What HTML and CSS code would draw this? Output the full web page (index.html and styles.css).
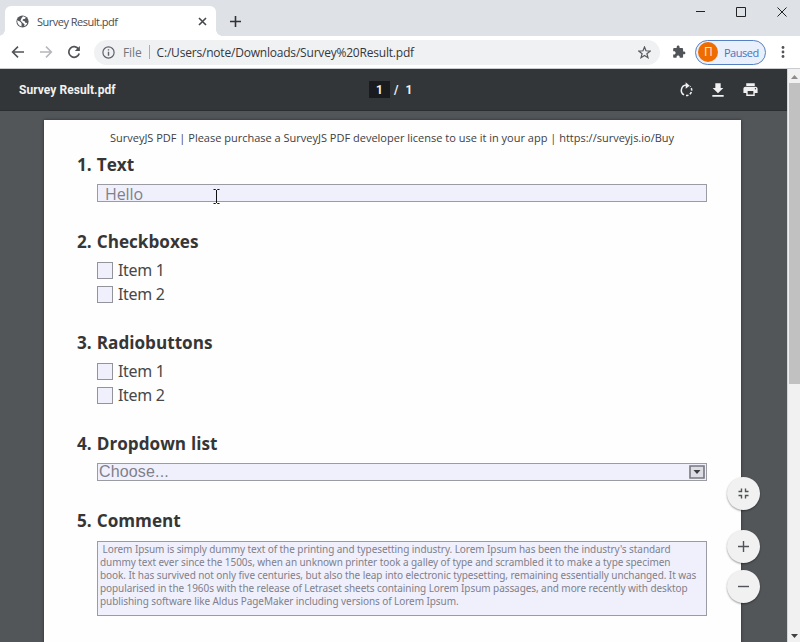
FILE: index.html
```html
<!DOCTYPE html>
<html lang="en">
<head>
<meta charset="utf-8">
<title>Survey Result.pdf</title>
<link rel="stylesheet" href="styles.css">
</head>
<body>
<div class="browser">
  <header class="tabstrip">
    <div class="tab">
      <svg class="globe" width="13" height="13" viewBox="0 0 13 13"><circle cx="6.5" cy="6.5" r="6.1" fill="#54575b"/><path d="M1.2 5.300 4.300 6.800 5.600 8.600 5.500 11.600C2.800 10.800 1 8.600 1.200 5.300ZM7 1.300 9.600 2.200 9.200 3.800 7 4.200 6.500 5.500 8.700 6.300 9.300 7.700 11.200 8.100C10.700 9.800 9.500 10.900 8.200 11.300L8.500 9.300 6.300 7.500 4.500 5.600 5.500 3.300Z" fill="#fff"/></svg>
      <span class="tab-title">Survey Result.pdf</span>
      <svg class="tab-close" width="9" height="9" viewBox="0 0 9 9"><path d="M1 1 8 8M8 1 1 8" stroke="#45484c" stroke-width="1.6"/></svg>
    </div>
    <svg class="new-tab" width="11" height="11" viewBox="0 0 11 11"><path d="M5.5 0V11M0 5.5H11" stroke="#303236" stroke-width="1.6"/></svg>
    <div class="window-buttons">
      <svg width="10" height="10" viewBox="0 0 10 10"><path d="M1 4.5H10" stroke="#222"/></svg>
      <svg width="10" height="10" viewBox="0 0 10 10"><path d="M.5 .5H9.5V9.5H.5Z" fill="none" stroke="#222"/></svg>
      <svg width="10" height="10" viewBox="0 0 10 10"><path d="M.5 .5 9.5 9.5M9.5 .5 .5 9.5" stroke="#222"/></svg>
    </div>
  </header>
  <nav class="toolbar">
    <svg class="nav-icon" width="14" height="14" viewBox="0 0 14 14"><path d="M13 7H2M7 1.6 1.6 7 7 12.4" fill="none" stroke="#505357" stroke-width="1.6"/></svg>
    <svg class="nav-icon" width="14" height="14" viewBox="0 0 14 14"><path d="M1 7H12M7 1.6 12.4 7 7 12.4" fill="none" stroke="#b5b7ba" stroke-width="1.5"/></svg>
    <svg class="nav-icon" width="14" height="14" viewBox="0 0 14 14"><path d="M11.6 4.2A5.3 5.3 0 1 0 12.2 8.4" fill="none" stroke="#505357" stroke-width="1.7"/><path d="M12.9 .9V6H7.8Z" fill="#505357"/></svg>
    <div class="omnibox">
      <svg width="13" height="13" viewBox="0 0 13 13"><circle cx="6.5" cy="6.5" r="5.6" fill="none" stroke="#5f6368" stroke-width="1.2"/><path d="M6.5 5.7V9.7M6.5 3.2V4.6" stroke="#5f6368" stroke-width="1.4"/></svg>
      <span class="scheme">File</span>
      <span class="divider"></span>
      <span class="url">C:/Users/note/Downloads/Survey%20Result.pdf</span>
      <svg class="star" width="13" height="13" viewBox="0 0 13 13"><path d="M6.5 1 8 4.8 12.1 5.1 8.9 7.7 10 11.7 6.5 9.5 3 11.7 4.1 7.7 .9 5.1 5 4.8Z" fill="none" stroke="#56595e" stroke-width="1.2"/></svg>
    </div>
    <svg class="puzzle" width="14" height="14" viewBox="0 0 24 24"><path d="M20.5 11H19V7c0-1.100-.9-2-2-2h-4V3.500C13 2.120 11.880 1 10.500 1S8 2.120 8 3.500V5H4c-1.100 0-1.990.9-1.990 2v3.800H3.500c1.490 0 2.700 1.210 2.700 2.700s-1.210 2.700-2.700 2.700H2V20c0 1.100.9 2 2 2h3.800v-1.500c0-1.490 1.210-2.700 2.700-2.700s2.700 1.210 2.700 2.700V22H17c1.100 0 2-.9 2-2v-4h1.500c1.380 0 2.500-1.120 2.500-2.500S21.880 11 20.500 11z" fill="#505357"/></svg>
    <div class="profile"><span class="avatar">П</span><span>Paused</span></div>
    <svg class="kebab" width="4" height="12" viewBox="0 0 4 12"><g fill="#505357"><circle cx="2" cy="1.5" r="1.4"/><circle cx="2" cy="6" r="1.4"/><circle cx="2" cy="10.500" r="1.4"/></g></svg>
  </nav>
  <main class="viewer">
    <div class="document-area">
      <div class="pdf-bar">
        <span class="pdf-title">Survey Result.pdf</span>
        <div class="pages"><span class="page-input">1</span><span class="slash">/</span><span>1</span></div>
        <div class="pdf-actions">
          <svg width="16" height="16" viewBox="0 0 24 24"><path d="M12.500 4.500A8 8 0 0 0 9 19.400" fill="none" stroke="#f1f1f1" stroke-width="2.300"/><path d="M11.500 .5 17.500 5.500 11.500 10Z" fill="#f1f1f1"/><path d="M12 20.300A8 8 0 0 0 20.500 12 8 8 0 0 0 18 6.500" fill="none" stroke="#f1f1f1" stroke-width="2.300" stroke-dasharray="3.800 2.200"/></svg>
          <svg width="16" height="16" viewBox="0 0 24 24"><path d="M20 9h-4V2H8v7H4l8 8ZM3.500 19.500v2.500h17v-2.500Z" fill="#f1f1f1"/></svg>
          <svg width="17" height="17" viewBox="0 0 24 24"><path d="M19 8H5c-1.660 0-3 1.340-3 3v6h4v4h12v-4h4v-6c0-1.660-1.340-3-3-3zm-3 11H8v-5h8v5zm3-7c-.55 0-1-.45-1-1s.45-1 1-1 1 .45 1 1-.45 1-1 1zM18 3H6v4h12V3z" fill="#f1f1f1"/></svg>
        </div>
      </div>
      <article class="page">
        <p class="notice">SurveyJS PDF | Please purchase a SurveyJS PDF developer license to use it in your app | https://surveyjs.io/Buy</p>
        <section class="question">
          <h2>1. Text</h2>
          <div class="field text-field"><span>Hello</span>
            <svg class="ibeam" width="7" height="15" viewBox="0 0 7 15"><path d="M.5 .5H2.500L3.500 1.500 4.500 .5H6.500M3.500 1V14M.5 14.500H2.500L3.500 13.500 4.500 14.500H6.500" fill="none" stroke="#111"/></svg>
          </div>
        </section>
        <section class="question">
          <h2>2. Checkboxes</h2>
          <ul class="choices"><li><i class="box"></i>Item 1</li><li><i class="box"></i>Item 2</li></ul>
        </section>
        <section class="question">
          <h2>3. Radiobuttons</h2>
          <ul class="choices"><li><i class="box"></i>Item 1</li><li><i class="box"></i>Item 2</li></ul>
        </section>
        <section class="question">
          <h2>4. Dropdown list</h2>
          <div class="field select-field"><span>Choose...</span>
            <svg width="16" height="14" viewBox="0 0 16 14"><path d="M1 1H15V13H1Z" fill="#dcdde5" stroke="#77787e" stroke-width="1.600"/><path d="M4.500 5H11.500L8 9Z" fill="#3d3e43"/></svg>
          </div>
        </section>
        <section class="question">
          <h2>5. Comment</h2>
          <div class="field comment-field"><span>&nbsp;Lorem Ipsum is simply dummy text of the printing and typesetting industry. Lorem Ipsum has been the industry's standard</span><span>dummy text ever since the 1500s, when an unknown printer took a galley of type and scrambled it to make a type specimen</span><span>book. It has survived not only five centuries, but also the leap into electronic typesetting, remaining essentially unchanged. It was</span><span>popularised in the 1960s with the release of Letraset sheets containing Lorem Ipsum passages, and more recently with desktop</span><span>publishing software like Aldus PageMaker including versions of Lorem Ipsum.</span></div>
        </section>
      </article>
      <div class="zoom-controls">
        <span class="round fit"><svg width="11" height="11" viewBox="0 0 11 11"><path d="M.5 3.500H3.500V.5M7.500 .5V3.500H10.500M.5 7.500H3.500V10.500M7.500 10.500V7.500H10.500" fill="none" stroke="#505357" stroke-width="1.400"/></svg></span>
        <span class="round"><svg width="11" height="11" viewBox="0 0 11 11"><path d="M5.500 0V11M0 5.500H11" stroke="#505357" stroke-width="1.400"/></svg></span>
        <span class="round"><svg width="11" height="11" viewBox="0 0 11 11"><path d="M0 5.500H11" stroke="#505357" stroke-width="1.400"/></svg></span>
      </div>
    </div>
    <div class="scrollbar">
      <svg class="up" width="7" height="4" viewBox="0 0 7 4"><path d="M0 4 3.500 0 7 4Z" fill="#8c8c8c"/></svg>
      <div class="thumb"></div>
      <svg class="down" width="7" height="4" viewBox="0 0 7 4"><path d="M0 0 3.500 4 7 0Z" fill="#404040"/></svg>
    </div>
  </main>
</div>
</body>
</html>
```
FILE: styles.css
```css
* { box-sizing: border-box; }
body { margin: 0; font-family: "Open Sans", "Noto Sans", sans-serif; overflow: hidden; }
svg { display: block; flex: none; }
.browser { width: 800px; height: 642px; display: flex; flex-direction: column; overflow: hidden; }

.tabstrip { height: 36px; flex: none; background: #dee1e6; display: flex; padding-left: 5px; }
.tab { position: relative; width: 211px; height: 30px; margin-top: 6px; padding: 0 9px 0 11px; background: #fff; border-radius: 6px 6px 0 0; display: flex; align-items: center; }
.tab::before, .tab::after { content: ""; position: absolute; bottom: 0; width: 6px; height: 6px; }
.tab::before { left: -6px; background: radial-gradient(circle at 0 0, transparent 5.5px, #fff 6px); }
.tab::after { right: -6px; background: radial-gradient(circle at 100% 0, transparent 5.5px, #fff 6px); }
.tab-title { margin-left: 8px; font-size: 11px; letter-spacing: -0.5px; color: #4a4c50; white-space: nowrap; }
.tab-close { margin-left: auto; }
.new-tab { margin: 16px 0 0 14px; }
.window-buttons { margin: 7px 13px 0 auto; display: flex; gap: 31px; }

.toolbar { height: 33px; flex: none; background: #fff; border-bottom: 1px solid #c9cbce; display: flex; align-items: center; padding-left: 11px; }
.nav-icon { margin-right: 14px; }
.omnibox { width: 566px; height: 25px; margin-left: -1px; border-radius: 13px; background: #f0f1f3; display: flex; align-items: center; padding: 0 9px 0 8px; font-size: 12px; white-space: nowrap; }
.scheme { margin-left: 8px; letter-spacing: -0.1px; color: #73767a; }
.divider { width: 1px; height: 14px; margin: 0 7px; background: #a9abaf; }
.url { letter-spacing: -0.2px; color: #35373b; }
.star { margin-left: auto; }
.puzzle { margin-left: 12px; }
.profile { width: 71px; height: 25px; margin-left: 9px; border: 1px solid #5580c4; border-radius: 13px; background: #e9effb; display: flex; align-items: center; padding-left: 2px; font-size: 11px; letter-spacing: -0.5px; color: #4774bf; }
.avatar { width: 20px; height: 20px; margin-right: 6px; border-radius: 50%; background: #ee6c00; color: #ffe9d6; font-size: 12px; line-height: 19px; text-align: center; }
.kebab { margin-left: 15px; }

.viewer { flex: 1; min-height: 0; display: flex; }
.document-area { position: relative; width: 787px; background: #525659; overflow: hidden; }
.pdf-bar { height: 42px; background: #323639; border-bottom: 1px solid #2b2e31; display: grid; grid-template-columns: 369px 1fr auto; align-items: center; padding-right: 28px; color: #f1f1f1; font: bold 12px Roboto, sans-serif; }
.pdf-title { padding-left: 19px; letter-spacing: 0.06px; }
.pages { display: flex; align-items: center; }
.page-input { width: 21px; height: 17px; line-height: 18px; text-align: center; background: #191b1e; }
.slash { margin: 0 7px 0 4px; }
.pdf-actions { display: flex; align-items: center; gap: 16px; }

.page { width: 697px; height: 560px; margin: 9px 0 0 44px; padding: 8px 34px 0 33px; background: #fefefe; box-shadow: 0 0 3px #2c2e30; color: #404040; }
.notice { margin: 0 0 5px; height: 20px; line-height: 20px; font-size: 11px; text-align: center; white-space: nowrap; color: #404040; }
.question { margin-bottom: 28px; }
.question h2 { margin: 0; height: 24px; line-height: 24px; font-size: 17.15px; font-weight: bold; word-spacing: 0.6px; color: #363636; white-space: nowrap; }
.field { position: relative; width: 610px; margin: 7px 0 0 20px; border: 1px solid #9b9ca3; background: #f0f0fd; color: #7f808a; }
.text-field { height: 18px; line-height: 18px; padding-left: 7px; font-size: 16px; letter-spacing: -0.1px; }
.ibeam { position: absolute; left: 115px; top: 4px; }
.choices { list-style: none; margin: 4px 0 -3px 20px; padding: 0; font-family: "Noto Sans", sans-serif; font-size: 16px; letter-spacing: -0.3px; color: #484848; }
.choices li { height: 24px; display: flex; align-items: center; gap: 5px; }
.box { width: 16px; height: 17px; border: 1px solid #92939b; background: #f0f0fd; }
.select-field { height: 18px; padding: 0 1px 0 1px; display: flex; align-items: center; justify-content: space-between; font: 16px/18px "Liberation Sans", sans-serif; letter-spacing: 0.15px; }
.comment-field { height: 75px; margin-top: 8px; padding: 1px 2px; font: 10px/13px "Noto Sans", sans-serif; letter-spacing: -0.075px; white-space: nowrap; }
.comment-field span { display: block; width: max-content; }

.zoom-controls { position: absolute; left: 727px; top: 408px; }
.round { width: 33px; height: 33px; margin-bottom: 7px; border-radius: 50%; background: #f1f1f1; box-shadow: 0 1px 2px rgba(0,0,0,.4); display: flex; align-items: center; justify-content: center; }
.fit { margin-bottom: 20px; }
.scrollbar { width: 13px; background: #f1f1f1; border-left: 1px solid #d5d5d5; display: flex; flex-direction: column; align-items: center; }
.up { margin-top: 6px; }
.thumb { width: 11px; height: 301px; margin-top: 4px; background: #c1c1c1; }
.down { margin: auto 0 4px; }
```
